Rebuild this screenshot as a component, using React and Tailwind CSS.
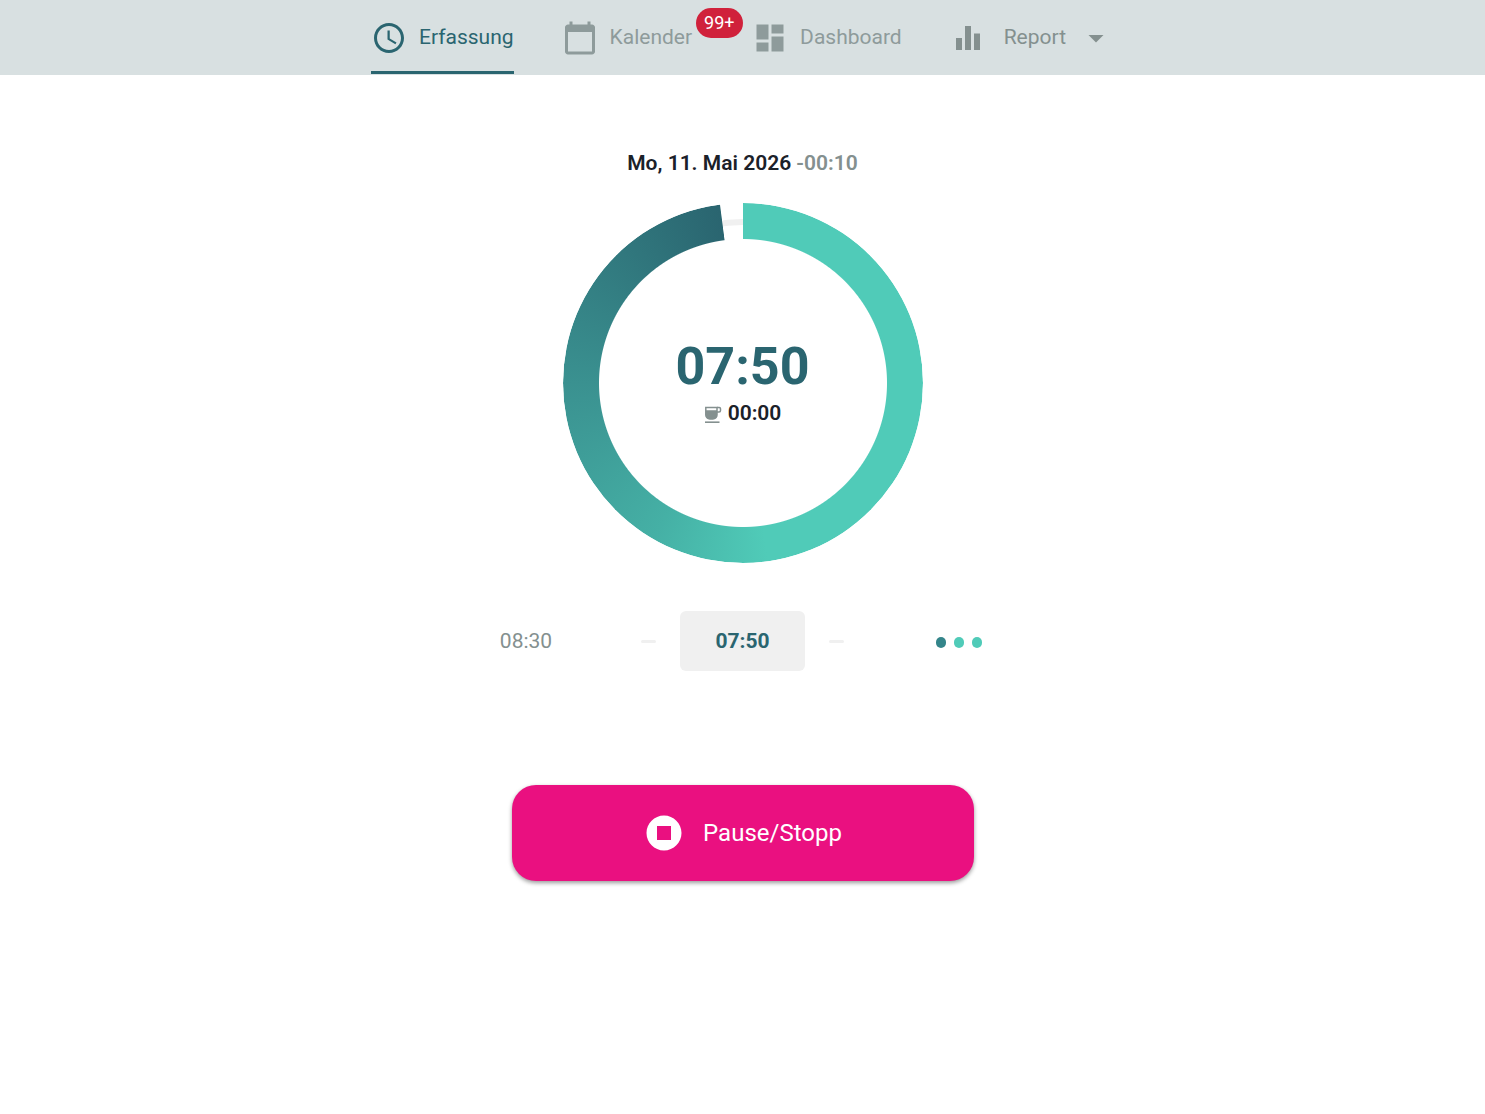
import React from "react";
import {
  MdAccessTime,
  MdArrowDropDown,
  MdCalendarToday,
  MdDashboard,
  MdEqualizer,
  MdStopCircle,
} from "react-icons/md";

const CupIcon = () => (
  <svg viewBox="0 0 18 18" className="mt-1 size-[18px] text-[#84908f]" aria-hidden="true">
    <path
      d="M1.8 1.5H13v7.5a4 4 0 0 1-4 4H5.8a4 4 0 0 1-4-4z"
      fill="none"
      stroke="currentColor"
      strokeWidth="1.5"
    />
    <path d="M1.8 4.300H13V9a4 4 0 0 1-4 4H5.800a4 4 0 0 1-4-4z" fill="currentColor" />
    <path
      d="M13 1.500h2.300a1.200 1.200 0 0 1 1.200 1.200v1.800a1.500 1.500 0 0 1-1.500 1.500H13"
      fill="none"
      stroke="currentColor"
      strokeWidth="1.500"
    />
    <path d="M1 16.200h14.500" stroke="currentColor" strokeWidth="1.600" />
  </svg>
);

const NavLabel = ({ children }) => <span className="pb-0.5">{children}</span>;

const NavBar = () => (
  <nav className="flex h-[75px] justify-center gap-12 bg-[#d8e0e1] text-[21px] leading-6 text-[#8e9b9b]">
    <a
      href="#erfassung"
      aria-current="page"
      className="mb-px flex items-center gap-3 border-b-3 border-[#2a6570] pt-1 text-[#2a6570]"
    >
      <MdAccessTime size={36} />
      <NavLabel>Erfassung</NavLabel>
    </a>
    <a href="#kalender" className="relative mr-3 flex items-center gap-3">
      <MdCalendarToday size={36} />
      <NavLabel>Kalender</NavLabel>
      <span className="absolute top-2 left-full ml-1 flex h-[30px] items-center rounded-full bg-[#d0213b] px-2 text-lg text-white">
        99+
      </span>
    </a>
    <a href="#dashboard" className="flex items-center gap-3">
      <MdDashboard size={36} />
      <NavLabel>Dashboard</NavLabel>
    </a>
    <button type="button" aria-haspopup="menu" className="flex items-center gap-3 text-[#84908f]">
      <MdEqualizer size={36} className="mr-1.5" />
      <NavLabel>Report</NavLabel>
      <MdArrowDropDown size={36} />
    </button>
  </nav>
);

const ProgressRing = ({ worked, pause }) => (
  <div className="relative flex size-[360px] items-center justify-center">
    <div className="absolute inset-4 rounded-full border-6 border-[#f0f0f0]" />
    <div className="absolute inset-0 rounded-full bg-[conic-gradient(#50cbb8_0deg,#50cbb8_172deg,#45b0a5_210deg,#3a9190_270deg,#2a6570_352.5deg,transparent_352.8deg)] mask-[radial-gradient(circle,transparent_143.5px,black_144.5px)]" />
    <div className="relative flex flex-col items-center">
      <div className="text-[52px] leading-[60px] font-bold text-[#2a6570]">{worked}</div>
      <div className="flex items-center gap-1.5 text-[21px] leading-8 font-semibold text-[#1b2129]">
        <CupIcon />
        {pause}
      </div>
    </div>
  </div>
);

const Dash = () => <span className="h-[3px] w-[15px] rounded-full bg-[#f0f0f0]" />;

const RunningDots = () => (
  <div className="flex w-[98px] justify-center gap-2 pt-0.5" role="status" aria-label="läuft">
    <span className="h-[11px] w-2.5 rounded-full bg-[#34858a]" />
    <span className="h-[11px] w-2.5 rounded-full bg-[#50cbb8]" />
    <span className="h-[11px] w-2.5 rounded-full bg-[#50cbb8]" />
  </div>
);

export default function App() {
  return (
    <div className="min-h-screen bg-white font-[Roboto,sans-serif]">
      <NavBar />
      <main className="flex flex-col items-center pt-[72px]">
        <h1 className="text-[21px] leading-8 font-semibold text-[#1b2129]">
          Mo, 11. Mai 2026 <span className="text-[#84908f]">-00:10</span>
        </h1>
        <div className="mt-6">
          <ProgressRing worked="07:50" pause="00:00" />
        </div>
        <div className="mt-12 flex items-center text-[21px] leading-6">
          <div className="w-[98px] text-center text-[#84908f]">08:30</div>
          <div className="flex w-[105px] justify-end pr-6">
            <Dash />
          </div>
          <div className="flex h-[60px] w-[125px] items-center justify-center rounded-md bg-[#f0f0f0] font-bold text-[#2a6570]">
            07:50
          </div>
          <div className="flex w-[105px] pl-6">
            <Dash />
          </div>
          <RunningDots />
        </div>
        <button
          type="button"
          className="mt-[114px] flex h-24 w-full max-w-[462px] items-center justify-center gap-[18px] rounded-3xl bg-[#ea1080] text-2xl text-white shadow-[0_2px_4px_rgba(0,0,0,0.4)]"
        >
          <MdStopCircle size={42} />
          Pause/Stopp
        </button>
      </main>
    </div>
  );
}
